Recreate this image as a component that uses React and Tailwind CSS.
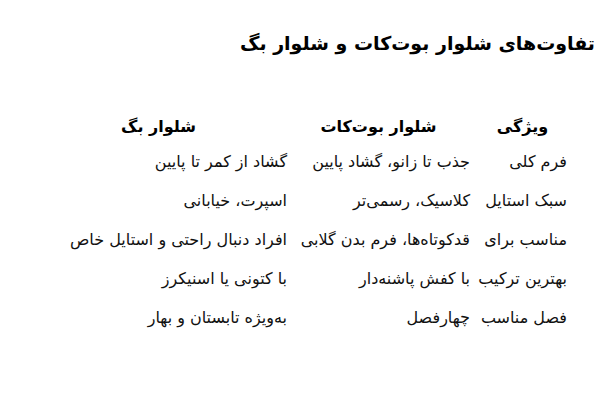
import React from "react";

const rows = [
  ["فرم کلی", "جذب تا زانو، گشاد پایین", "گشاد از کمر تا پایین"],
  ["سبک استایل", "کلاسیک، رسمی‌تر", "اسپرت، خیابانی"],
  ["مناسب برای", "قدکوتاه‌ها، فرم بدن گلابی", "افراد دنبال راحتی و استایل خاص"],
  ["بهترین ترکیب", "با کفش پاشنه‌دار", "با کتونی یا اسنیکرز"],
  ["فصل مناسب", "چهارفصل", "به‌ویژه تابستان و بهار"],
];

export default function App() {
  return (
    <div
      dir="rtl"
      className="w-[600px] h-[400px] bg-white text-[#111] overflow-hidden"
      style={{ fontFamily: '"DejaVu Sans", sans-serif' }}
    >
      {/* title */}
      <h1 className="pt-[29px] pr-[5px] text-[19px] leading-[28px] font-bold text-black">
        تفاوت‌های شلوار بوت‌کات و شلوار بگ
      </h1>

      {/* table */}
      <div className="mt-[60px] pr-[33px] pl-[30px]">
        <div className="grid grid-cols-[97px_183px_1fr] text-[16px] font-bold leading-[20px] text-black">
          <div className="text-center pl-[8px]">ویژگی</div>
          <div className="text-center">شلوار بوت‌کات</div>
          <div className="text-center">شلوار بگ</div>
        </div>
        <div className="mt-[5px]">
          {rows.map((r, i) => (
            <div
              key={i}
              className="grid grid-cols-[97px_183px_1fr] h-[39px] items-center text-[16px] leading-[22px] whitespace-nowrap"
            >
              <div>{r[0]}</div>
              <div>{r[1]}</div>
              <div>{r[2]}</div>
            </div>
          ))}
        </div>
      </div>
    </div>
  );
}
